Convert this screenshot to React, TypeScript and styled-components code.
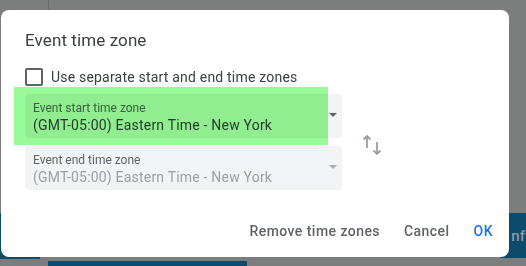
import * as React from "react";
import styled, { createGlobalStyle } from "styled-components";

const GlobalStyle = createGlobalStyle`
  html, body {
    margin: 0;
    padding: 0;
    width: 526px;
    height: 266px;
    overflow: hidden;
    background: #7c7d7d;
    font-family: Roboto, "Liberation Sans", Arial, sans-serif;
  }
`;

export default function App() {
  return (
    <>
      <GlobalStyle />
      <Page>
        {/* bits of the dimmed calendar behind the dialog */}
        <BackLine />
        <BackBar $left={0} $top={213} $width={40} $height={46} />
        <BackBar $left={48} $top={261} $width={199} $height={5} />
        <BackBar $left={500} $top={213} $width={26} $height={45}>
          <BackText>nf</BackText>
        </BackBar>

        <Dialog>
          <Title>Event time zone</Title>
          <CheckRow>
            <Checkbox />
            <CheckLabel>Use separate start and end time zones</CheckLabel>
          </CheckRow>

          <ZoneRow>
            <Fields>
              <Field>
                <FieldLabel>Event start time zone</FieldLabel>
                <FieldValue>(GMT-05:00) Eastern Time - New York</FieldValue>
                <Caret />
              </Field>
              <Field $disabled>
                <FieldLabel>Event end time zone</FieldLabel>
                <FieldValue $disabled>(GMT-05:00) Eastern Time - New York</FieldValue>
                <Caret $disabled />
              </Field>
            </Fields>
            <SwapButton>
              <svg width="20" height="22" viewBox="0 0 20 22" fill="none" stroke="#9aa0a6" strokeWidth="1.8">
                <path d="M5 2v12M1.5 5.5L5 2l3.5 3.5" />
                <path d="M15 8v12M11.5 16.5L15 20l3.5-3.5" />
              </svg>
            </SwapButton>
          </ZoneRow>

          <Footer>
            <TextButton>Remove time zones</TextButton>
            <TextButton>Cancel</TextButton>
            <TextButton $primary>OK</TextButton>
          </Footer>

          <Highlight />
        </Dialog>
      </Page>
    </>
  );
}

const Page = styled.div`
  position: relative;
  width: 526px;
  height: 266px;
  padding: 10px 0 0 1px;
  box-sizing: border-box;
`;

const BackLine = styled.div`
  position: absolute;
  left: 48px;
  top: 0;
  width: 1px;
  height: 10px;
  background: #6a6b6b;
`;

const BackBar = styled.div<{ $left: number; $top: number; $width: number; $height: number }>`
  position: absolute;
  left: ${(p) => p.$left}px;
  top: ${(p) => p.$top}px;
  width: ${(p) => p.$width}px;
  height: ${(p) => p.$height}px;
  background: #0e4a6c;
  display: flex;
  align-items: center;
  justify-content: flex-end;
  overflow: hidden;
`;

const BackText = styled.span`
  color: #8a9aa6;
  font-size: 15px;
  font-weight: 500;
  margin-right: 1px;
`;

const Dialog = styled.div`
  position: relative;
  z-index: 1;
  width: 508px;
  height: 247px;
  background: #fff;
  border-radius: 8px;
  padding: 18px 8px 8px 24px;
  box-sizing: border-box;
  display: flex;
  flex-direction: column;
`;

const Title = styled.div`
  font-size: 17px;
  line-height: 24px;
  color: #3c4043;
  letter-spacing: 0.1px;
`;

const CheckRow = styled.div`
  display: flex;
  align-items: center;
  gap: 8px;
  height: 24px;
  margin-top: 13px;
`;

const Checkbox = styled.div`
  width: 18px;
  height: 18px;
  border: 2px solid #5f6368;
  border-radius: 2px;
  box-sizing: border-box;
`;

const CheckLabel = styled.span`
  font-size: 14px;
  color: #3c4043;
  letter-spacing: 0.2px;
`;

const ZoneRow = styled.div`
  display: flex;
  align-items: center;
  gap: 20px;
  margin-top: 5px;
`;

const Fields = styled.div`
  display: flex;
  flex-direction: column;
  gap: 8px;
  width: 317px;
`;

const Field = styled.div<{ $disabled?: boolean }>`
  position: relative;
  height: 44px;
  box-sizing: border-box;
  padding: 6px 8px 0;
  background: #f1f3f4;
  border-radius: 4px;
`;

const FieldLabel = styled.div`
  font-size: 12px;
  line-height: 16px;
  color: #5f6368;
`;

const FieldValue = styled.div<{ $disabled?: boolean }>`
  font-size: 14px;
  line-height: 18px;
  color: ${(p) => (p.$disabled ? "#9aa0a6" : "#3c4043")};
  letter-spacing: 0.2px;
`;

const Caret = styled.div<{ $disabled?: boolean }>`
  position: absolute;
  right: 5px;
  top: 19px;
  width: 0;
  height: 0;
  border-left: 4px solid transparent;
  border-right: 4px solid transparent;
  border-top: 4px solid ${(p) => (p.$disabled ? "#a8acb0" : "#5f6368")};
`;

const SwapButton = styled.div`
  flex-shrink: 0;
  width: 20px;
  height: 22px;
  margin-top: 6px;
  display: flex;
`;

const Footer = styled.div`
  margin-top: auto;
  display: flex;
  justify-content: flex-end;
  gap: 8px;
`;

const TextButton = styled.div<{ $primary?: boolean }>`
  height: 36px;
  padding: 0 8px;
  display: flex;
  align-items: center;
  font-size: 14px;
  font-weight: 500;
  letter-spacing: 0.45px;
  color: ${(p) => (p.$primary ? "#1a73e8" : "#5f6368")};
`;

const Highlight = styled.div`
  position: absolute;
  left: 13px;
  top: 77px;
  width: 314px;
  height: 58px;
  background: #98fa98;
  mix-blend-mode: multiply;
  pointer-events: none;
`;
